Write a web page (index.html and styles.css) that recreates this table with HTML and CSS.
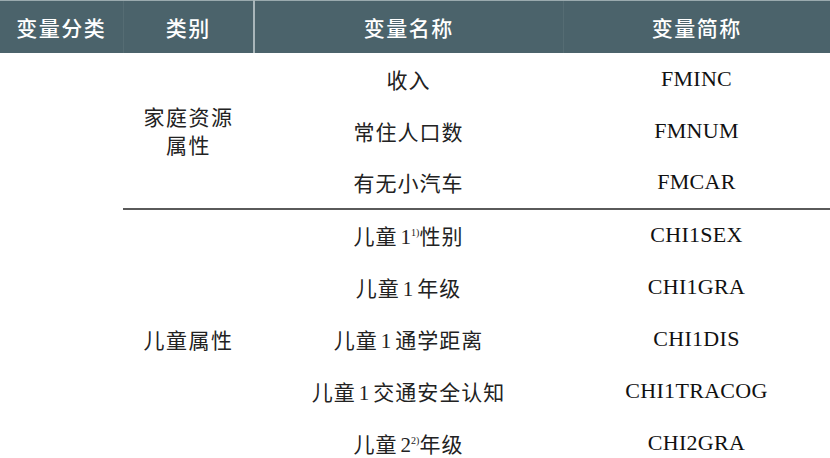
FILE: index.html
```html
<!DOCTYPE html>
<html lang="zh">
<head>
<meta charset="utf-8">
<link rel="stylesheet" href="styles.css">
</head>
<body>
<table class="vars">
  <colgroup>
    <col class="c0"><col class="c1"><col class="c2"><col class="c3">
  </colgroup>
  <thead>
    <tr>
      <th class="h0">变量分类</th>
      <th class="h1">类别</th>
      <th class="h2">变量名称</th>
      <th class="h3">变量简称</th>
    </tr>
  </thead>
  <tbody>
    <tr>
      <td rowspan="8" class="empty"></td>
      <td rowspan="3" class="cat"><span class="ln">家庭资源</span><span class="ln">属性</span></td>
      <td class="name">收入</td>
      <td class="abbr">FMINC</td>
    </tr>
    <tr><td class="name">常住人口数</td><td class="abbr">FMNUM</td></tr>
    <tr><td class="name">有无小汽车</td><td class="abbr">FMCAR</td></tr>
    <tr class="sep">
      <td rowspan="5" class="cat">儿童属性</td>
      <td class="name">儿童<span class="num sup-num">1<sup>1)</sup></span>性别</td>
      <td class="abbr">CHI1SEX</td>
    </tr>
    <tr><td class="name">儿童<span class="num">1</span>年级</td><td class="abbr">CHI1GRA</td></tr>
    <tr><td class="name">儿童<span class="num">1</span>通学距离</td><td class="abbr">CHI1DIS</td></tr>
    <tr><td class="name">儿童<span class="num">1</span>交通安全认知</td><td class="abbr">CHI1TRACOG</td></tr>
    <tr><td class="name">儿童<span class="num sup-num">2<sup>2)</sup></span>年级</td><td class="abbr">CHI2GRA</td></tr>
  </tbody>
</table>
</body>
</html>
```
FILE: styles.css
```css
html, body {
  margin: 0;
  padding: 0;
  background: #ffffff;
}
body {
  font-family: "Noto Sans CJK SC", "Noto Sans", sans-serif;
  color: #222;
  overflow: hidden;
}
.vars {
  width: 830px;
  border-collapse: collapse;
  table-layout: fixed;
}
.c0 { width: 123px; }
.c1 { width: 131px; }
.c2 { width: 309px; }
.c3 { width: 267px; }

.vars th {
  height: 52px;
  padding: 0;
  background: #4b636b;
  color: #ffffff;
  font-size: 21px;
  font-weight: 500;
  letter-spacing: 1.5px;
  text-align: center;
  vertical-align: middle;
  border-top: 1px solid #9aaaae;
  box-sizing: border-box;
}
.vars th.h1 { border-left: 1px solid #556c73; }
.vars th.h2 { border-left: 2px solid #a9b6ba; }
.vars th.h3 { border-left: 1px solid #556c73; }

.vars td {
  height: 52px;
  padding: 0;
  text-align: center;
  vertical-align: middle;
  box-sizing: border-box;
}
.cat {
  font-size: 21px;
  letter-spacing: 1.5px;
  padding-left: 1px;
}
.cat .ln {
  display: block;
  line-height: 28px;
}
.name {
  font-size: 21px;
  letter-spacing: 1px;
  padding-left: 1px;
}
.num {
  font-family: "Liberation Serif", serif;
  font-size: 21px;
  letter-spacing: 0;
  margin: 0 4px 0 3px;
}
.num.sup-num {
  margin: 0 0 0 3px;
}
.num sup {
  font-size: 10px;
  vertical-align: 8px;
  line-height: 0;
  letter-spacing: 0;
}
.abbr {
  font-family: "Liberation Serif", "Times New Roman", serif;
  font-size: 22px;
  letter-spacing: 0.3px;
  color: #111;
}
.sep td {
  border-top: 2px solid #5a5a5a;
}
```
